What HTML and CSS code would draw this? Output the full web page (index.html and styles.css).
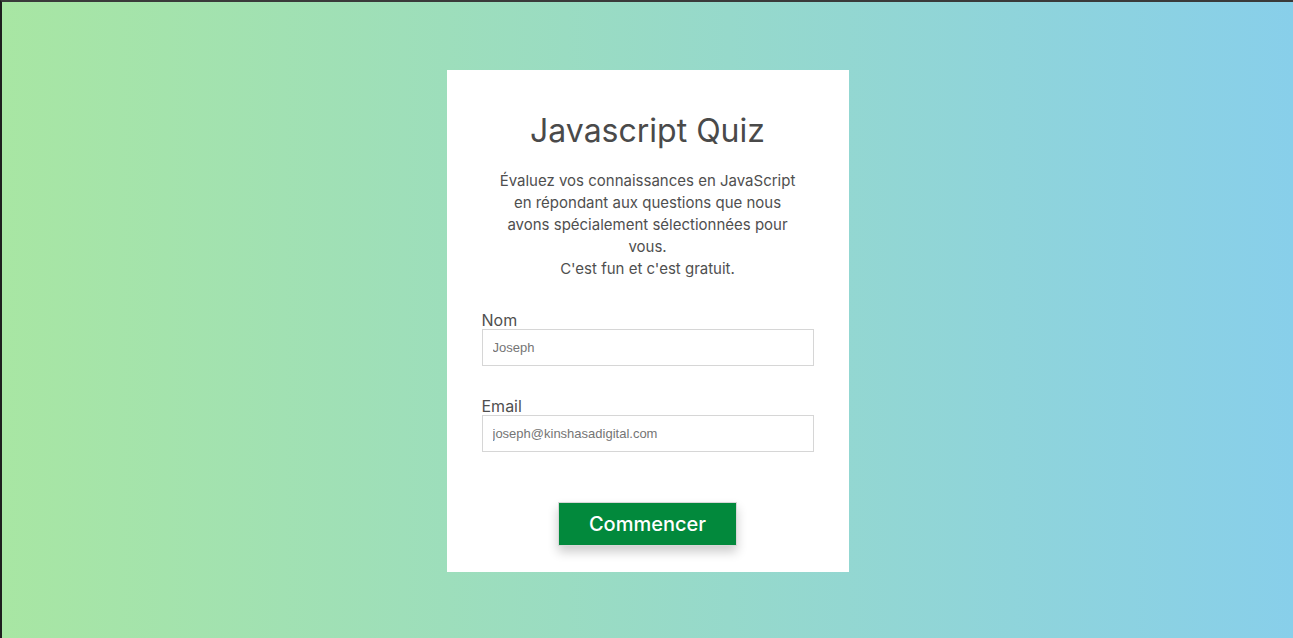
FILE: index.html
```html
<!DOCTYPE html>
<html lang="fr">
<head>
<meta charset="utf-8">
<title>Javascript Quiz</title>
<link rel="stylesheet" href="styles.css">
</head>
<body>
<div class="page">
  <main class="card">
    <h1 class="title">Javascript Quiz</h1>
    <p class="intro">Évaluez vos connaissances en JavaScript en répondant aux questions que nous avons spécialement sélectionnées pour vous.<br>C'est fun et c'est gratuit.</p>
    <form class="form">
      <div class="field">
        <label class="label" for="nom">Nom</label>
        <input class="input" id="nom" type="text" placeholder="Joseph">
      </div>
      <div class="field">
        <label class="label" for="email">Email</label>
        <input class="input" id="email" type="email" placeholder="joseph@kinshasadigital.com">
      </div>
      <div class="actions">
        <button class="btn" type="button">Commencer</button>
      </div>
    </form>
  </main>
</div>
</body>
</html>
```

FILE: styles.css
```css
* { box-sizing: border-box; }
html, body { margin: 0; padding: 0; }
body {
  background: #222;
  font-family: Inter, "Noto Sans", sans-serif;
}
.page {
  height: 638px;
  padding-top: 2px;
  border-top: 2px solid #3a3a3a;
  border-left: 2px solid #1e1e1e;
  background: linear-gradient(to right, #a8e6a3, #88cfea);
  display: flex;
  align-items: center;
  justify-content: center;
}
.card {
  width: 402px;
  height: 502px;
  background: #fff;
  padding: 36px 35px 0;
  display: flex;
  flex-direction: column;
  align-items: center;
}
.title {
  margin: 0;
  font-size: 32px;
  font-weight: 400;
  color: #4a4a4a;
  line-height: 50px;
}
.intro {
  margin: 14px 0 0;
  width: 300px;
  text-align: center;
  font-size: 15px;
  line-height: 22px;
  color: #4f4f4f;
}
.form {
  width: 100%;
  margin-top: 31px;
  display: flex;
  flex-direction: column;
  gap: 31px;
}
.field { display: flex; flex-direction: column; }
.label {
  font-family: Inter, Roboto, sans-serif;
  font-size: 16px;
  line-height: 18px;
  color: #4f4f4f;
}
.input {
  height: 37px;
  border: 1px solid #d6d6d6;
  padding: 0 10px;
  font-family: "Liberation Sans", Arial, sans-serif;
  font-size: 13px;
  color: #333;
  outline: none;
}
.input::placeholder { color: #757575; }
.actions {
  display: flex;
  justify-content: center;
  margin-top: 19px;
}
.btn {
  width: 179px;
  height: 44px;
  background: #02893c;
  border: 1px solid #d8d8d8;
  color: #fff;
  font-family: Inter, "Noto Sans", sans-serif;
  font-size: 20px;
  font-weight: 500;
  box-shadow: 0 6px 10px rgba(0,0,0,0.2);
  cursor: pointer;
}
```
